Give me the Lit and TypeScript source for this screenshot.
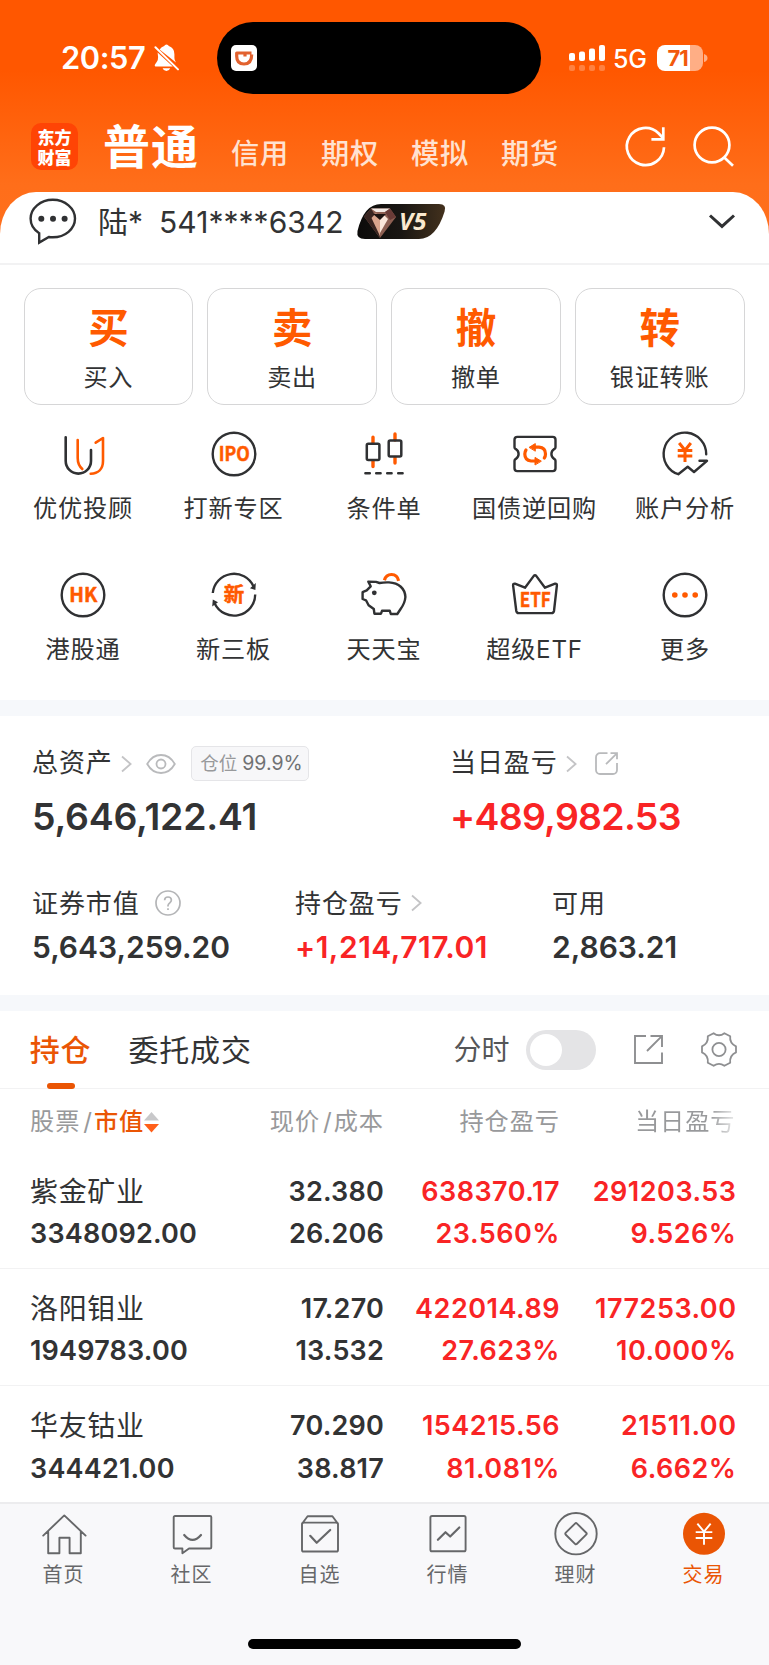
import { LitElement, html, css, svg } from "lit";
import { customElement } from "lit/decorators.js";

const DARK = "#303133";
const ORANGE = "#ff5a00";

const icon = (w: number, h: number, body: unknown) =>
  html`<svg class="ico" width=${w} height=${h} viewBox="0 0 ${w} ${h}" fill="none" stroke-linecap="round" stroke-linejoin="round">${body}</svg>`;

const yuan = (cx: number, top: number, w: number, h: number) =>
  `M${cx - w * 0.4} ${top}L${cx} ${top + h * 0.38}L${cx + w * 0.4} ${top}M${cx} ${top + h * 0.38}V${top + h}M${cx - w / 2} ${top + h * 0.4}H${cx + w / 2}M${cx - w / 2} ${top + h * 0.68}H${cx + w / 2}`;

const ring = svg`<circle cx="24" cy="24" r="21.3"/>`;

/* Shortcut icons, drawn on a 48px canvas */
const shortcutIcons: Record<string, unknown> = {
  advisor: svg`<g stroke-width="2.6"><path stroke=${DARK} d="M6.7 7.3V31a12.65 12.65 0 0 0 25.3 0V20"/><path stroke=${ORANGE} d="M18.7 10V28Q18.7 35 23.3 39"/><path stroke=${ORANGE} d="M36.7 12.7L44 8V31C44 39 39 43.5 31.7 43.7"/></g>`,
  ipo: svg`<g stroke=${DARK} stroke-width="2.4">${ring}</g><text class="glyph" transform="translate(24.2 31.2) scale(.88 1)" font-size="20">IPO</text>`,
  candle: svg`<g stroke-width="2.6"><path stroke=${ORANGE} stroke-width="3.4" d="M13 7.2V13M13 31V36.5M35 4V10M35 27.5V33"/><g stroke=${DARK} stroke-width="2.5"><rect x="6.8" y="13.8" width="12.6" height="16.2" rx="1.5"/><rect x="28.7" y="10.4" width="12.6" height="16.2" rx="1.5"/><path d="M5.4 43.3h4.4M16.2 43.3h4.4M27.2 43.3h4.4M38.2 43.3h4.4"/></g></g>`,
  repo: svg`<path stroke=${DARK} stroke-width="2.4" d="M6.3 6.9H41.7A2.8 2.8 0 0 1 44.5 9.7V17.2Q44.5 18.4 43.2 19.1Q40.4 21 40.4 24T43.2 28.9Q44.5 29.6 44.5 30.8V38.3A2.8 2.8 0 0 1 41.7 41.1H6.3A2.8 2.8 0 0 1 3.5 38.3V30.8Q3.5 29.6 4.8 28.9Q7.6 27 7.6 24T4.8 19.1Q3.5 18.4 3.5 17.2V9.7A2.8 2.8 0 0 1 6.3 6.9Z"/><g stroke=${ORANGE} stroke-width="3.2"><path d="M23 17.2H28Q34.5 17.8 34.5 24Q34.5 26.3 33.3 28"/><path d="M25 31H20Q13.8 30.2 13.8 24Q13.8 21.8 15 20"/></g><path fill=${ORANGE} stroke=${ORANGE} d="M18.4 17.2L24.3 13.6V20.8ZM30 31L24 27.4V34.6Z"/>`,
  analysis: svg`<path stroke=${DARK} stroke-width="2.4" d="M45.2 24.3A21.3 21.3 0 1 0 17.3 44.2L26.7 36.8L33 42L46 30.8H38.5"/><path stroke=${ORANGE} stroke-width="3" stroke-linecap="butt" d=${yuan(24, 13, 14.6, 19)}/>`,
  hk: svg`<g stroke=${DARK} stroke-width="2.4">${ring}</g><text class="glyph" transform="translate(24.2 31.1) scale(.97 1)" font-size="20">HK</text>`,
  neeq: svg`<g stroke=${DARK} stroke-width="2.4"><path stroke-linecap="butt" d="M2.8 22A21.3 21.3 0 0 1 43.4 15.3M45.2 23.4A21.3 21.3 0 0 1 4.7 32.5"/></g><path fill=${DARK} d="M40 17.2L45.4 19L45.8 12ZM2.2 35.5L2.8 28.4L8 31.2Z"/><text class="glyph" x="24" y="31.3" font-size="20.5">新</text>`,
  pig: svg`<path stroke=${DARK} stroke-width="2.4" d="M8.3 10.6L16 10.9L19.5 12Q24 11.2 29 11.4C39 11.9 45 17.6 45.4 26Q45 32 40.6 38L37.3 43H30.8L29.8 39.8H22L21 42.7H14.4L13.8 38L8.6 34.2L6 29.3L2.6 28V21.2L6.7 19.4L10.7 15.3Z"/><circle cx="14.3" cy="21.8" r="2.4" fill=${DARK}/><path stroke=${ORANGE} stroke-width="3.2" stroke-linecap="butt" d="M24.4 9.2C26.5 1.6 36.8 1.4 38.6 9.8"/>`,
  etf: svg`<path stroke=${DARK} stroke-width="2.4" d="M3.9 12.7L14 16.7L22.8 4.9Q24 3.6 25.2 4.9L34 16.7L44.1 12.7Q46 12.5 45.9 14.3L43 40Q42.6 42.1 40.6 42.1H7.7Q5.7 42.1 5.3 40L2.1 14.3Q2 12.5 3.9 12.7Z"/><text class="glyph" transform="translate(24.2 35.6) scale(.85 1)" font-size="20">ETF</text>`,
  more: svg`<g stroke=${DARK} stroke-width="2.4">${ring}</g><g fill=${ORANGE}><circle cx="13.8" cy="24" r="2.8"/><circle cx="24" cy="24" r="2.8"/><circle cx="34.2" cy="24" r="2.8"/></g>`,
};

/* Tab bar icons, drawn on a 44px canvas */
const G = "#666769";
const tabIcons: Record<string, unknown> = {
  home: svg`<path stroke=${G} stroke-width="1.9" d="M1.2 23.6L22.3 3.4L43.6 23.6M6.2 19.4V41.3H17.4V25.8H27.6V41.3H38.8V19.4"/>`,
  social: svg`<path stroke=${G} stroke-width="1.9" d="M5 4H40A1.3 1.3 0 0 1 41.3 5.3V35.2A1.3 1.3 0 0 1 40 36.5H19L12.4 41.3V36.5H5A1.3 1.3 0 0 1 3.7 35.2V5.3A1.3 1.3 0 0 1 5 4Z"/><path stroke=${G} stroke-width="2.2" d="M14.2 23Q22.5 32.8 31 23"/>`,
  watch: svg`<rect x="4" y="10.6" width="36" height="28.9" rx="1.6" stroke=${G} stroke-width="1.9"/><path stroke=${G} stroke-width="1.9" d="M4.6 11L9.6 4.2H34.4L39.4 11"/><path stroke=${G} stroke-width="2.2" d="M12.2 23.8L18.7 30.8L32.2 18"/>`,
  market: svg`<rect x="4.4" y="4" width="35.2" height="35.3" rx="1.6" stroke=${G} stroke-width="1.9"/><path stroke=${G} stroke-width="2.2" d="M11.9 27.8L19.5 20.2L24.2 24.5L33.3 15.5"/>`,
  wealth: svg`<circle cx="22" cy="21.7" r="20.7" stroke=${G} stroke-width="1.9"/><path stroke=${G} stroke-width="1.9" d="M21 11.6Q22 10.6 23 11.6L32.2 20.7Q33.2 21.7 32.2 22.7L23 31.8Q22 32.8 21 31.8L11.8 22.7Q10.8 21.7 11.8 20.7Z"/>`,
  trade: svg`<circle cx="22" cy="21.8" r="21" fill="#ea5504"/><path stroke="#fff" stroke-width="1.9" stroke-linecap="butt" d=${yuan(22, 11.6, 16.6, 21.2)}/>`,
};

const arrow = html`<svg class="ico arrow" width="11" height="18" viewBox="0 0 11 18" fill="none"><path d="M1 1.5L9.6 9L1 16.5" stroke="#c4c4c6" stroke-width="1.8"/></svg>`;

const quick = [["买", "买入"], ["卖", "卖出"], ["撤", "撤单"], ["转", "银证转账"]];
const shortcuts = [
  ["advisor", "优优投顾"], ["ipo", "打新专区"], ["candle", "条件单"], ["repo", "国债逆回购"], ["analysis", "账户分析"],
  ["hk", "港股通"], ["neeq", "新三板"], ["pig", "天天宝"], ["etf", "超级ETF"], ["more", "更多"],
];
const holdings = [
  ["紫金矿业", "3348092.00", "32.380", "26.206", "638370.17", "23.560%", "291203.53", "9.526%"],
  ["洛阳钼业", "1949783.00", "17.270", "13.532", "422014.89", "27.623%", "177253.00", "10.000%"],
  ["华友钴业", "344421.00", "70.290", "38.817", "154215.56", "81.081%", "21511.00", "6.662%"],
];
const tabs = [["home", "首页"], ["social", "社区"], ["watch", "自选"], ["market", "行情"], ["wealth", "理财"], ["trade", "交易"]];

@customElement("app-root")
export class AppRoot extends LitElement {
  static styles = css`
    :host { display: flex; flex-direction: column; width: 769px; height: 1665px; overflow: hidden; background: #fff; color: #323334; font-family: Inter, "Noto Sans CJK SC", sans-serif; }
    * { box-sizing: border-box; }
    .ico { display: block; flex: none; overflow: visible; }
    .glyph { fill: #ff5a00; stroke: #ff5a00; stroke-width: .5px; font-family: "Noto Sans CJK SC", sans-serif; font-weight: 700; text-anchor: middle; }

    .hero { height: 265px; background: linear-gradient(#ff5700 0, #ff5700 70px, #ff6e1a 185px, #ff701e 265px); flex: none; }
    .status { height: 116px; display: flex; align-items: center; color: #fff; padding-left: 61px; }
    .time { font-size: 30.8px; font-weight: 600; line-height: 40px; width: 93px; letter-spacing: -.4px; }
    .island { width: 324px; height: 72px; border-radius: 36px; background: #000; margin: 0 28px 0 38px; display: flex; align-items: center; padding-left: 14px; }
    .net { font-size: 25px; font-weight: 500; line-height: 30px; margin: 1px 10px 0 8px; letter-spacing: -.3px; }
    .battery { width: 46px; height: 26px; border-radius: 8px; background: linear-gradient(90deg, #fff 33px, #ffae85 33px); color: #f2590c; font-size: 22px; line-height: 26px; font-weight: 700; padding-left: 11px; letter-spacing: -1px; margin-right: 1.5px; }
    .nav { height: 76px; display: flex; align-items: center; padding-left: 31px; color: #fff; }
    .logo { width: 47px; height: 47px; border-radius: 10px; background: #ff4405; font: 900 17px/19.5px "Noto Sans CJK SC"; text-align: center; padding-top: 4px; margin-top: -15px; }
    .main { font-size: 47px; line-height: 60px; font-weight: 700; margin: -15px 32px 0 25px; letter-spacing: 1px; }
    .mode { width: 90px; font-size: 28.2px; line-height: 40px; font-weight: 500; letter-spacing: .8px; color: #ffe2d1; }
    .nav .refresh { margin: -15px 27px 0 34px; }
    .nav .search { margin-top: -15px; }
    .account { height: 73px; background: #fff; border-radius: 36px 36px 0 0 / 42px 42px 0 0; border-bottom: 2px solid #f2f2f3; display: flex; align-items: center; padding: 0 34px 12px 29px; }
    .who { font-size: 30px; line-height: 40px; font-weight: 400; margin-left: 21px; width: 61px; white-space: nowrap; }
    .num { font-size: 30px; line-height: 40px; font-weight: 400; letter-spacing: .05px; width: 198px; white-space: nowrap; }
    .level { font: italic 700 24px "Open Sans", sans-serif; fill: #fbe9cf; letter-spacing: .2px; }
    .down { margin-left: auto; }

    .quick { display: grid; grid-template-columns: repeat(4, 1fr); gap: 14px; padding: 23px 24.5px 0 23.5px; }
    .q { height: 117px; border: 1px solid #d6d6d7; border-radius: 17px; display: flex; flex-direction: column; align-items: center; padding: 18px 0 0; }
    .q b { font-size: 40.5px; line-height: 44px; color: #ff5a00; font-weight: 700; }
    .q span, .s span { font-size: 24.2px; line-height: 30px; letter-spacing: .8px; white-space: nowrap; font-weight: 400; }
    .q span { margin-top: 12px; }
    .grid { display: grid; grid-template-columns: repeat(5, 150.5px); grid-auto-rows: 140.6px; padding: 25px 0 0 7.8px; height: 295px; }
    .s { display: flex; flex-direction: column; align-items: center; }
    .s span { margin-top: 16px; }
    .band { height: 16px; background: #f6f8fb; flex: none; }

    .assets { height: 279px; padding: 32px 32px 0; flex: none; }
    .two { display: grid; grid-template-columns: 418px 1fr; height: 139px; align-content: start; }
    .three { display: grid; grid-template-columns: 263px 257px 1fr; }
    .lab { display: flex; align-items: center; height: 31px; font-size: 26px; line-height: 30px; letter-spacing: .9px; white-space: nowrap; }
    .lab span { margin-top: -1px; }
    .three .lab span { margin-top: 2px; }
    .arrow { margin-left: 8px; }
    .three .arrow { margin-top: 1px; }
    .eye { margin-left: 14px; }
    .pos { margin-left: 15.5px; width: 118px; height: 35px; border: 1.5px solid #e5e5e8; border-radius: 5px; background: #f7f7f9; font-size: 19.5px; line-height: 33px; color: #707173; letter-spacing: 0; padding-left: 8px; white-space: nowrap; }
    .pos i { font-style: normal; color: #98999b; font-size: 18.5px; margin-right: 5px; }
    .big { font-size: 37.4px; line-height: 46px; font-weight: 600; margin-top: 15px; letter-spacing: -.2px; }
    .big.red { letter-spacing: -.7px; }
    .mid { font-size: 30px; line-height: 36px; font-weight: 600; margin-top: 11px; white-space: nowrap; }
    .mid.red { letter-spacing: .5px; }
    .red { color: #f92425; }

    .bar { height: 78px; flex: none; border-bottom: 1.5px solid #f2f2f3; display: flex; align-items: stretch; padding-left: 30.5px; font-size: 30px; line-height: 79px; }
    .on { color: #ea5504; font-weight: 500; width: 60px; letter-spacing: .8px; display: flex; flex-direction: column; align-items: center; white-space: nowrap; }
    .on i { width: 28px; height: 6px; border-radius: 3px; background: #ea5504; margin-top: -7px; flex: none; }
    .off { margin-left: 38px; letter-spacing: .8px; width: 325px; }
    .fs { font-size: 28px; color: #555658; width: 72px; }
    .bar .ico, .toggle { align-self: center; }
    .toggle { width: 70px; height: 40px; border-radius: 20px; background: #e4e4e6; padding: 4px; }
    .toggle i { display: block; width: 32px; height: 32px; border-radius: 50%; background: #fff; }
    .cols { display: grid; grid-template-columns: 201px 153px 176px 176.5px; padding-left: 30px; }
    .cols > div { text-align: right; white-space: nowrap; }
    .cols > div:first-child { text-align: left; letter-spacing: .2px; }
    .cols > div:nth-child(2) { letter-spacing: .2px; }
    .head { height: 64px; flex: none; align-items: center; font-size: 24.2px; line-height: 66px; color: #98999b; letter-spacing: .9px; }
    .cols.head > div { letter-spacing: .95px; }
    .cols.head .fade { padding-right: 1px; }
    .head .sortable { display: flex; align-items: center; }
    .head em { font-style: normal; color: #ea5504; font-weight: 500; }
    .sl { margin: 0 1px 0 3px; }
    .fade { background: linear-gradient(90deg, #98999b 150px, #fff 182px); background-clip: text; -webkit-background-clip: text; color: transparent; }
    .row { height: 117.2px; flex: none; border-bottom: 1.5px solid #f2f2f3; padding-top: 19px; margin-top: -1px; font-size: 27px; line-height: 42px; font-weight: 600; letter-spacing: .5px; }
    .row + .row { margin-top: 0; }
    .row:nth-last-child(2) { border: 0; height: 116px; }
    .row .name { font-size: 28px; font-weight: 400; letter-spacing: .65px; }
    .row p { margin: 0; height: 42.3px; }

    .tabs { flex: 1; background: #f8f8fa; border-top: 2px solid #ececee; display: flex; flex-direction: column; align-items: center; }
    .tabrow { display: grid; grid-template-columns: repeat(6, 128px); padding-top: 8px; height: 135px; width: 769px; }
    .t { display: flex; flex-direction: column; align-items: center; color: #666769; font-size: 20px; line-height: 26px; letter-spacing: 1px; }
    .t span { margin: 6px 1px 0 0; }
    .t.active { color: #ea5504; }
    .home { width: 273px; height: 10px; border-radius: 5px; background: #000; }
  `;

  render() {
    return html`
      <header class="hero">
        <div class="status">
          <div class="time">20:57</div>
          ${icon(25, 28, svg`<path fill="#fff" d="M5.6 5.4Q7.5 2.7 10.2 2Q10.8 .4 12.5 .4T14.8 2Q20.4 3.7 20.4 10.2V14Q20.4 16.5 22 18.6ZM3.6 8.6L18.8 22.6H1.3Q.2 21.7 1 20.5L3 17.6Q4.1 16 4.1 13ZM8.6 24.2H16.2Q15.2 27 12.4 27T8.6 24.2Z"/><path stroke="#fff" stroke-width="2" d="M1.4 3.2L24 25.4"/>`)}
          <div class="island">
            ${icon(26, 26, svg`<rect width="26" height="26" rx="5" fill="#fff"/><path stroke="#e2622f" stroke-width="3.2" stroke-linecap="butt" d="M20.5 8H5.7V11.3Q5.7 19 13 19Q20.7 19 20.7 9.5M14 8V11.5"/>`)}
          </div>
          ${icon(36, 26, svg`<g fill="#fff"><rect x="0" y="8" width="6" height="8" rx="2"/><rect x="10" y="6.5" width="6" height="9.5" rx="2"/><rect x="20" y="3.5" width="6" height="12.5" rx="2"/><rect x="30" y="0" width="6" height="16" rx="2"/></g><g fill="#ff8140"><rect y="20" width="6" height="6" rx="2"/><rect x="10" y="20" width="6" height="6" rx="2"/><rect x="20" y="20" width="6" height="6" rx="2"/><rect x="30" y="20" width="6" height="6" rx="2"/></g>`)}
          <div class="net">5G</div>
          <div class="battery">71</div>
          ${icon(4, 8, svg`<path fill="#ffae85" d="M0 0Q3.5 1 3.5 4T0 8Z"/>`)}
        </div>
        <nav class="nav">
          <div class="logo">东方<br />财富</div>
          <div class="main">普通</div>
          <div class="mode">信用</div><div class="mode">期权</div><div class="mode">模拟</div><div class="mode">期货</div>
          <svg class="ico refresh" width="41" height="41" viewBox="0 0 41 41" fill="none" stroke="#fff" stroke-width="2.7"><path d="M39 21.2A18.6 18.6 0 1 1 33.5 7.3L38.5 12.5M38.3 1.2V13.4H26.4"/></svg>
          <svg class="ico search" width="41" height="41" viewBox="0 0 41 41" fill="none" stroke="#fff" stroke-width="2.7"><circle cx="19" cy="19" r="17.4"/><path d="M31 31.2L40 39.8"/></svg>
        </nav>
        <section class="account">
          ${icon(48, 48, svg`<path stroke=${DARK} stroke-width="2.4" stroke-linejoin="miter" d="M10.2 35.2Q1.6 30 1.6 20.6C1.6 10.2 11.5 1.8 23.8 1.8S46 10.2 46 20.6S36.2 39.3 23.8 39.3Q21.5 39.3 19.8 39L10.2 44.6Z"/><g fill=${DARK}><circle cx="12.3" cy="20.8" r="3"/><circle cx="24" cy="20.8" r="3"/><circle cx="35.6" cy="20.8" r="3"/></g>`)}
          <div class="who">陆*</div>
          <div class="num">541****6342</div>
          <svg class="ico" width="89" height="35" viewBox="0 0 89 35">
            <defs><linearGradient id="lv"><stop offset="0" stop-color="#0c0b0a"/><stop offset=".5" stop-color="#191613"/><stop offset="1" stop-color="#43311d"/></linearGradient></defs>
            <path fill="url(#lv)" d="M24 0H82Q90 0 87.6 7.5Q79 35 62 35H8Q-1 35 .5 27Q7 0 24 0Z"/>
            <path fill="#8d5f52" d="M7 12.5L14 4.5H33L39 13L23 34Z"/><path fill="#f3e9e4" d="M14 4.5H33L28 8H19Z"/><path fill="#3a2521" d="M7 12.5L14 4.5L19 13L23 34Z"/><path fill="#d9a48d" d="M14.5 14L19 9L23 15V32Z"/><path fill="#fbe6da" d="M23 15L27 11L31 15L23 29Z"/><path fill="#6a3b37" d="M28 8L33 4.5L39 13L33 16Z"/><path fill="#1c1210" d="M16 10H29L23 16Z"/>
            <text class="level" x="42" y="26.4">V5</text>
          </svg>
          <svg class="ico down" width="26" height="15" viewBox="0 0 26 15" fill="none"><path stroke=${DARK} stroke-width="3" d="M1 1.5L13 12.4L25 1.5"/></svg>
        </section>
      </header>

      <section class="quick">${quick.map(([a, b]) => html`<div class="q"><b>${a}</b><span>${b}</span></div>`)}</section>
      <section class="grid">${shortcuts.map(([k, t]) => html`<div class="s">${icon(48, 48, shortcutIcons[k])}<span>${t}</span></div>`)}</section>
      <div class="band"></div>

      <section class="assets">
        <div class="two">
          <div>
            <div class="lab"><span>总资产</span>${arrow}
              <svg class="ico eye" width="30" height="20" viewBox="0 0 30 20" fill="none" stroke="#b9babc" stroke-width="1.8"><path d="M1.2 10C8-2 22-2 28.8 10C22 22 8 22 1.2 10Z"/><circle cx="15" cy="10" r="4.5"/></svg>
              <div class="pos"><i>仓位</i>99.9%</div>
            </div>
            <div class="big">5,646,122.41</div>
          </div>
          <div>
            <div class="lab"><span>当日盈亏</span>${arrow}
              <svg class="ico" style="margin-left:18px" width="23" height="23" viewBox="0 0 23 23" fill="none" stroke="#b9babc" stroke-width="1.8"><path d="M12.5 1.2H5A4 4 0 0 0 1 5.2V18A4 4 0 0 0 5 22H18A4 4 0 0 0 22 18V11M15.5 1.2H22V7.2M21.6 1.6L11 12.2"/></svg>
            </div>
            <div class="big red">+489,982.53</div>
          </div>
        </div>
        <div class="three">
          <div>
            <div class="lab"><span>证券市值</span>
              <svg class="ico" style="margin-left:15.5px;margin-top:1px" width="26" height="26" viewBox="0 0 26 26" fill="none" stroke="#b4b5b7" stroke-width="1.7"><circle cx="13" cy="13" r="12"/><path d="M9.6 10.2Q9.7 7 13 7T16.4 10Q16.4 11.5 14.8 12.8T13 15.6V16.4M13 18.2V20"/></svg>
            </div>
            <div class="mid">5,643,259.20</div>
          </div>
          <div><div class="lab"><span>持仓盈亏</span>${arrow}</div><div class="mid red">+1,214,717.01</div></div>
          <div><div class="lab"><span>可用</span></div><div class="mid">2,863.21</div></div>
        </div>
      </section>
      <div class="band"></div>

      <section class="bar">
        <div class="on">持仓<i></i></div>
        <div class="off">委托成交</div>
        <div class="fs">分时</div>
        <div class="toggle"><i></i></div>
        <svg class="ico" style="margin-left:38px" width="29" height="29" viewBox="0 0 29 29" fill="none" stroke="#8e8f91" stroke-width="1.9"><path d="M12 1H1V28H28V17.5M16.5 1H28V12M27.6 1.4L13 16"/></svg>
        <svg class="ico" style="margin-left:38px" width="36" height="35" viewBox="0 0 36 35" fill="none" stroke="#8e8f91" stroke-width="1.8" stroke-linejoin="round"><path d="M12.6 1.2Q18 5.4 23.4 1.2L29.2 4.2Q28.4 11.4 35 14.4V20.4Q28.4 23.4 29.2 30.8L23.4 33.8Q18 29.8 12.6 33.8L6.8 30.8Q7.6 23.4 1 20.4V14.4Q7.6 11.4 6.8 4.2Z"/><circle cx="18" cy="17.5" r="6.6"/></svg>
      </section>

      <div class="cols head">
        <div class="sortable">股票<span class="sl">/</span><em>市值</em>
          <svg class="ico" width="15" height="21" viewBox="0 0 15 21"><path fill="#c8c8ca" d="M7.5 0L15 8.5H0Z"/><path fill="#ff5f1a" d="M7.5 20.5L0 12H15Z"/></svg>
        </div>
        <div>现价<span class="sl">/</span>成本</div><div>持仓盈亏</div><div class="fade">当日盈亏</div>
      </div>
      ${holdings.map(h => html`<div class="cols row">
        <div><p class="name">${h[0]}</p><p>${h[1]}</p></div>
        <div><p>${h[2]}</p><p>${h[3]}</p></div>
        <div class="red"><p>${h[4]}</p><p>${h[5]}</p></div>
        <div class="red"><p>${h[6]}</p><p>${h[7]}</p></div>
      </div>`)}
      <footer class="tabs">
        <div class="tabrow">${tabs.map(([k, t]) => html`<div class="t ${k === "trade" ? "active" : ""}">${icon(44, 44, tabIcons[k])}<span>${t}</span></div>`)}</div>
        <div class="home"></div>
      </footer>
    `;
  }
}
